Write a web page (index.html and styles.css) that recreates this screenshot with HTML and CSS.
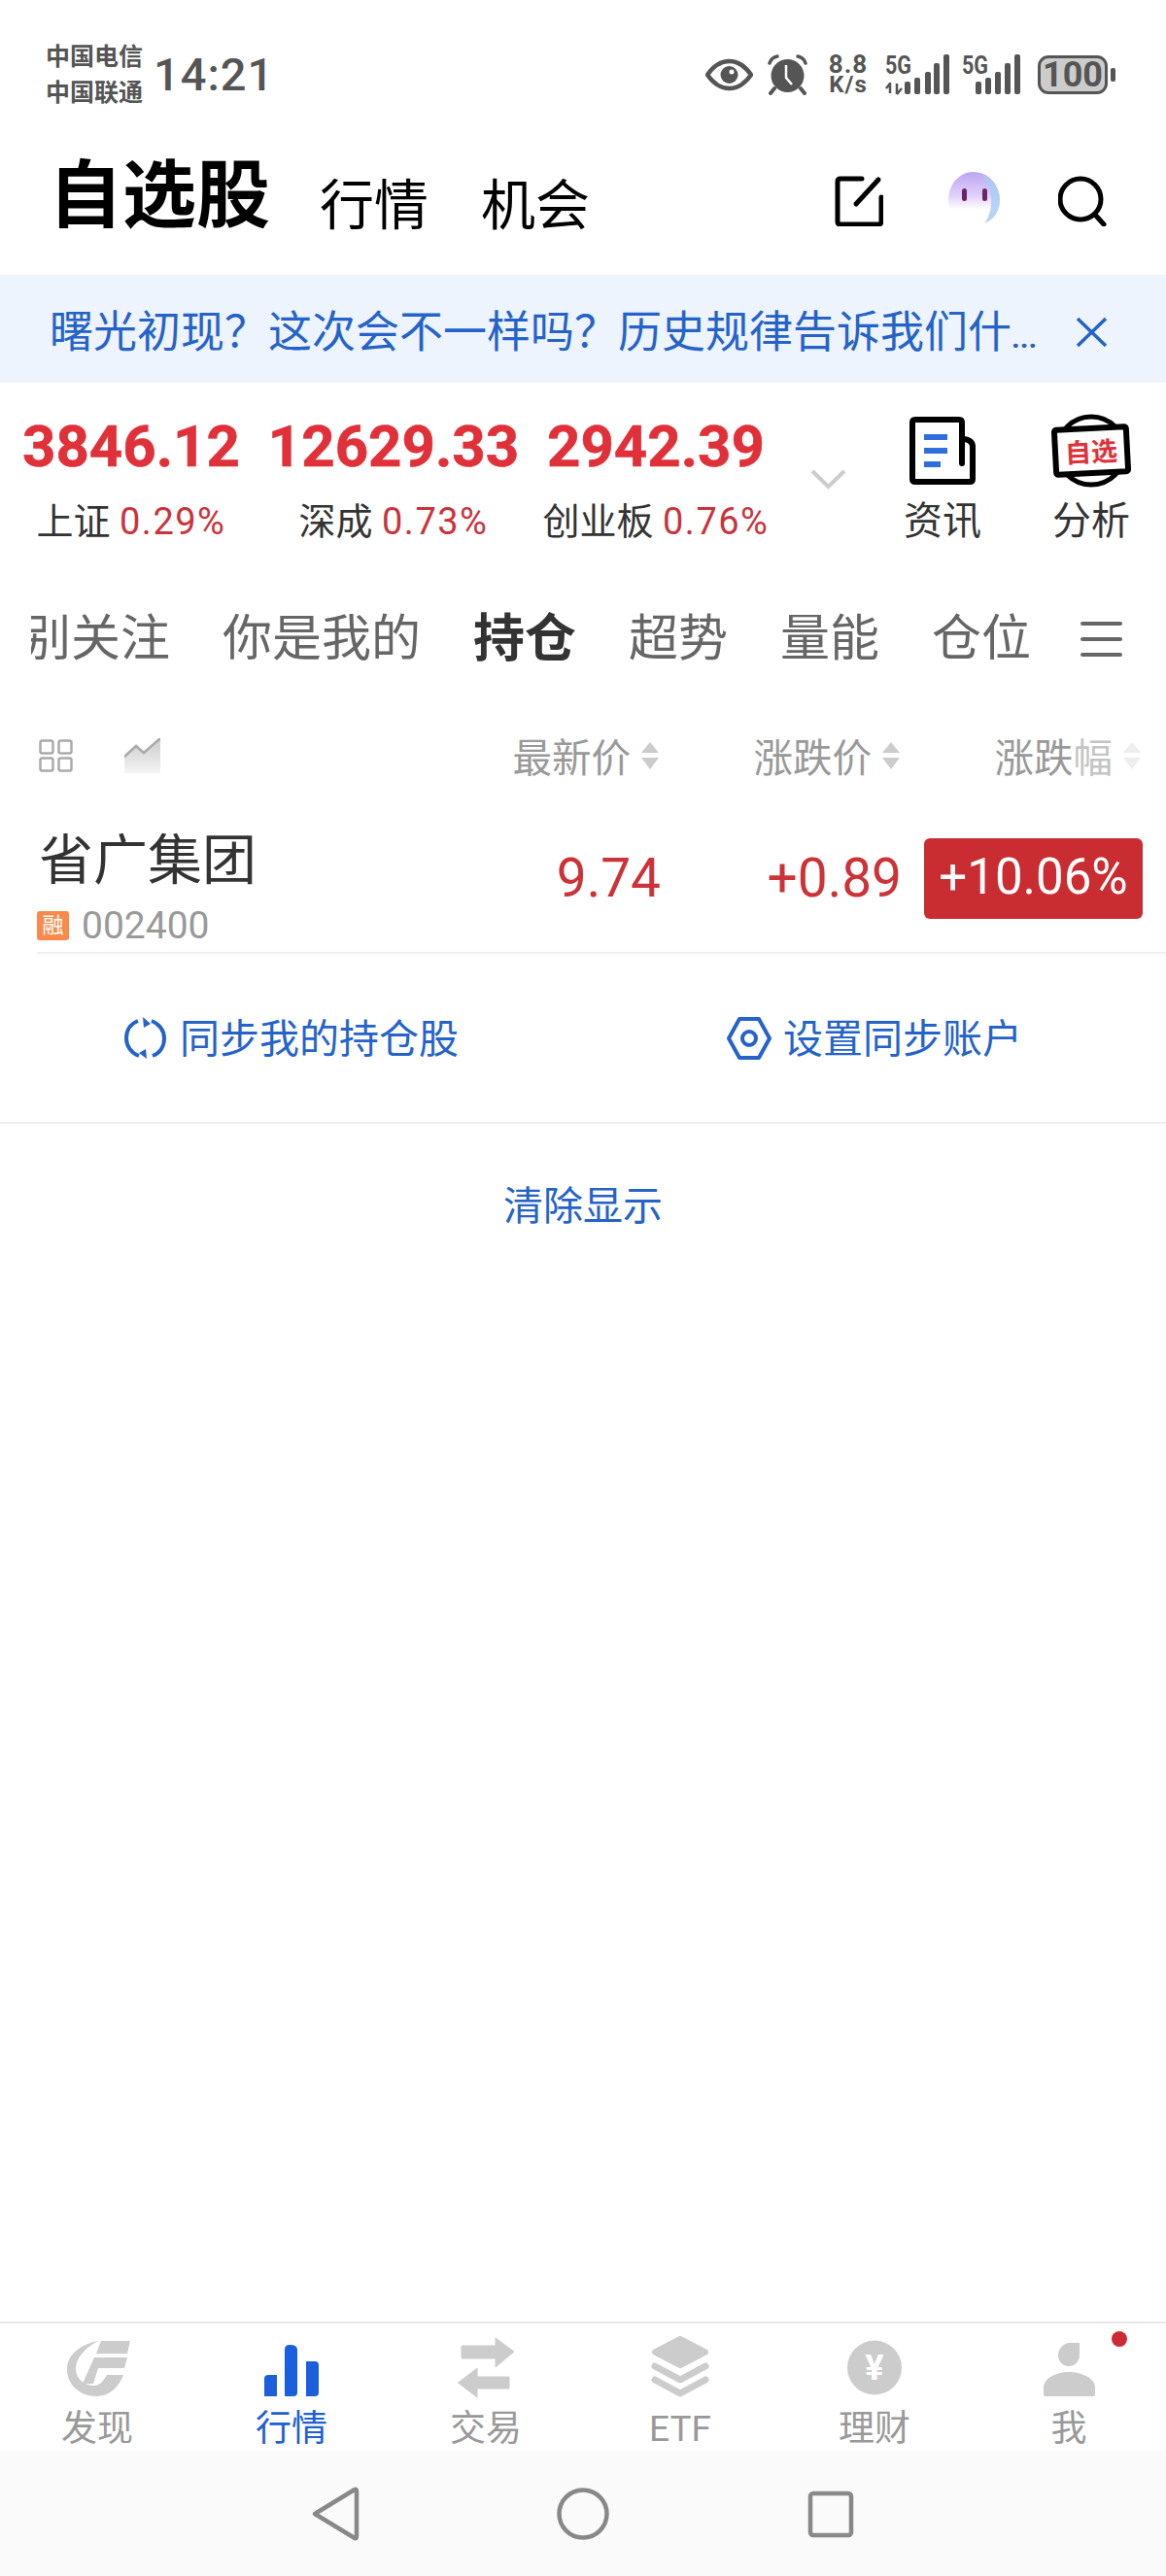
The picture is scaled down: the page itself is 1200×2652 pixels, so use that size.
FILE: index.html
```html
<!DOCTYPE html>
<html lang="zh">
<head>
    <meta charset="utf-8">
    <title>自选股</title>
    <link rel="stylesheet" href="styles.css">
</head>
<body>
    <div class="status">
        <div class="carrier">
            <div>中国电信</div>
            <div>中国联通</div>
        </div>
        <div class="time">14:21</div>
        <div class="status-icons">
            <svg class="st-eye" width="49" height="34" viewBox="0 0 49 34">
                <path d="M2 17 C9 7 16 3 24.5 3 C33 3 40 7 47 17 C40 27 33 31 24.5 31 C16 31 9 27 2 17 Z" fill="none" stroke="#555" stroke-width="4.5"/>
                <circle cx="24.5" cy="17" r="9" fill="#555"/>
                <circle cx="27" cy="14" r="2.5" fill="#fff"/>
            </svg>
            <svg class="st-alarm" width="41" height="42" viewBox="0 0 41 42">
                <circle cx="20.5" cy="22" r="17" fill="#555"/>
                <path d="M2 9 Q4 3 10 2 M39 9 Q37 3 31 2" fill="none" stroke="#555" stroke-width="3.5" stroke-linecap="round"/>
                <path d="M7 35 L3 40 M34 35 L38 40" stroke="#555" stroke-width="4" stroke-linecap="round"/>
                <path d="M19 11 V24 L25 31" fill="none" stroke="#fff" stroke-width="2.5"/>
            </svg>
            <div class="st-speed">
                <div class="speed-num">8.8</div>
                <div class="speed-unit">K/s</div>
            </div>
            <svg class="st-sig1" width="66" height="54" viewBox="0 -6 66 54">
                <text class="sig-text" x="0" y="20" textLength="27" lengthAdjust="spacingAndGlyphs">5G</text>
                <path d="M5 29 V40 M1 35 L5 30 M12 30 V41 M12 41 L17 35" fill="none" stroke="#555" stroke-width="2.5"/>
                <rect x="20" y="28" width="6" height="13" rx="2" fill="#555"/>
                <rect x="30" y="24" width="6" height="17" rx="2" fill="#555"/>
                <rect x="41" y="18" width="6" height="23" rx="2" fill="#555"/>
                <rect x="50" y="9" width="6" height="32" rx="2" fill="#555"/>
                <rect x="60" y="0" width="6" height="41" rx="2" fill="#555"/>
            </svg>
            <svg class="st-sig2" width="61" height="54" viewBox="0 -6 61 54">
                <text class="sig-text" x="0" y="20" textLength="27" lengthAdjust="spacingAndGlyphs">5G</text>
                <rect x="14" y="28" width="6" height="13" rx="2" fill="#555"/>
                <rect x="24" y="24" width="6" height="17" rx="2" fill="#555"/>
                <rect x="34" y="18" width="6" height="23" rx="2" fill="#555"/>
                <rect x="44" y="9" width="6" height="32" rx="2" fill="#555"/>
                <rect x="54" y="0" width="6" height="41" rx="2" fill="#555"/>
            </svg>
            <div class="battery">100</div>
            <div class="battery-nub"></div>
        </div>
    </div>

    <div class="titlebar">
        <div class="title-main">自选股</div>
        <div class="title-sub">行情</div>
        <div class="title-sub">机会</div>
        <div class="title-icons">
            <svg width="50" height="57" viewBox="0 0 50 57">
                <path d="M28 8 H6 Q3 8 3 11 V52 Q3 55 6 55 H45 Q48 55 48 52 V27" fill="none" stroke="#000" stroke-width="5" stroke-linecap="round"/>
                <path d="M22 34 L45 9" fill="none" stroke="#000" stroke-width="5" stroke-linecap="round"/>
            </svg>
            <svg class="icon-ghost" width="54" height="57" viewBox="0 0 54 57">
                <defs>
                    <linearGradient id="ghostBody" x1="0" y1="0" x2="0" y2="1">
                        <stop offset="0" stop-color="#bba6f0"/>
                        <stop offset="0.45" stop-color="#e0d0fa"/>
                        <stop offset="0.72" stop-color="#ffffff"/>
                    </linearGradient>
                </defs>
                <path d="M27 1 C42 1 54 14 54 30 C54 44 44 55 27 55 C12 55 1 44 1 30 C1 14 12 1 27 1 Z" fill="url(#ghostBody)"/>
                <path d="M36 4 C47 9 54 19 54 30 C54 42 47 51 38 54 C46 44 50 24 36 4 Z" fill="#a9cdf6" opacity="0.85"/>
                <rect x="15" y="18" width="5" height="13" rx="2.5" fill="#6a2467"/>
                <rect x="36" y="18" width="5" height="13" rx="2.5" fill="#6a2467"/>
            </svg>
            <svg class="icon-search" width="50" height="57" viewBox="0 0 50 57">
                <circle cx="23" cy="29" r="21" fill="none" stroke="#000" stroke-width="5"/>
                <path d="M38 45 L47 55" stroke="#000" stroke-width="5" stroke-linecap="round"/>
            </svg>
        </div>
    </div>

    <div class="banner">
        <div class="banner-text">曙光初现？这次会不一样吗？历史规律告诉我们什<span class="dots">...</span></div>
        <svg class="banner-close" width="33" height="32" viewBox="0 0 33 32">
            <path d="M2 2 L31 30 M31 2 L2 30" stroke="#2563c9" stroke-width="3.5"/>
        </svg>
    </div>

    <div class="indexes">
        <div class="index">
            <div class="index-val">3846.12</div>
            <div class="index-sub">上证 <span class="pct">0.29%</span></div>
        </div>
        <div class="index">
            <div class="index-val">12629.33</div>
            <div class="index-sub">深成 <span class="pct">0.73%</span></div>
        </div>
        <div class="index">
            <div class="index-val">2942.39</div>
            <div class="index-sub">创业板 <span class="pct">0.76%</span></div>
        </div>
        <svg class="chevron" width="37" height="21" viewBox="0 0 37 21">
            <path d="M2 2 L18.5 18 L35 2" fill="none" stroke="#ccc" stroke-width="4"/>
        </svg>
        <div class="tool">
            <svg width="68" height="80" viewBox="0 0 68 80">
                <rect x="15" y="23" width="24" height="6" fill="#2f6fdc"/>
                <rect x="15" y="37" width="24" height="6" fill="#2f6fdc"/>
                <rect x="15" y="51" width="17" height="6" fill="#2f6fdc"/>
                <path d="M54 53 V11 Q54 8 51 8 H6 Q3 8 3 11 V69 Q3 72 6 72 H62 Q65 72 65 69 V36 Q65 29 56 28" fill="none" stroke="#000" stroke-width="6" stroke-linecap="round"/>
            </svg>
            <div class="tool-label">资讯</div>
        </div>
        <div class="tool">
            <svg width="84" height="80" viewBox="0 0 84 80">
                <circle cx="42" cy="40" r="35" fill="none" stroke="#000" stroke-width="5"/>
                <g transform="rotate(-3 42 40)">
                    <rect x="5" y="17" width="74" height="46" rx="2" fill="#fff" stroke="#000" stroke-width="6"/>
                    <text class="tool-brand" x="42" y="51" text-anchor="middle">自选</text>
                </g>
            </svg>
            <div class="tool-label">分析</div>
        </div>
    </div>

    <div class="tabs">
        <div class="tabs-scroll">
            <div class="tab first">别关注</div>
            <div class="tab">你是我的</div>
            <div class="tab active">持仓</div>
            <div class="tab">超势</div>
            <div class="tab">量能</div>
            <div class="tab">仓位</div>
        </div>
        <div class="tabs-menu">
            <span></span>
            <span></span>
            <span></span>
        </div>
    </div>

    <div class="table-row table-head">
        <div class="head-icons">
            <svg width="35" height="34" viewBox="0 0 35 34">
                <rect x="1.5" y="1.5" width="13" height="13" rx="2" fill="none" stroke="#aaa" stroke-width="2.5"/>
                <rect x="20.5" y="1.5" width="13" height="13" rx="2" fill="none" stroke="#aaa" stroke-width="2.5"/>
                <rect x="1.5" y="19.5" width="13" height="13" rx="2" fill="none" stroke="#aaa" stroke-width="2.5"/>
                <rect x="20.5" y="19.5" width="13" height="13" rx="2" fill="none" stroke="#aaa" stroke-width="2.5"/>
            </svg>
            <svg width="37" height="36" viewBox="0 0 37 36">
                <defs>
                    <linearGradient id="chartFill" x1="0" y1="0" x2="0" y2="1">
                        <stop offset="0" stop-color="#ccc"/>
                        <stop offset="1" stop-color="#f4f4f4"/>
                    </linearGradient>
                </defs>
                <path d="M0 19 L12 8 L20 15 L37 0 V36 H0 Z" fill="url(#chartFill)"/>
                <path d="M0 19 L12 8 L20 15 L37 0" fill="none" stroke="#aaa" stroke-width="2.5"/>
            </svg>
        </div>
        <div class="head-cell">最新价
            <svg class="sort" width="18" height="28" viewBox="0 0 18 28"><path d="M9 0 L18 11 H0 Z M0 16 H18 L9 28 Z" fill="#ccc"/></svg>
        </div>
        <div class="head-cell">涨跌价
            <svg class="sort" width="18" height="28" viewBox="0 0 18 28"><path d="M9 0 L18 11 H0 Z M0 16 H18 L9 28 Z" fill="#ccc"/></svg>
        </div>
        <div class="head-cell">涨跌<span class="fade">幅</span>
            <svg class="sort" width="18" height="28" viewBox="0 0 18 28"><path d="M9 0 L18 11 H0 Z M0 16 H18 L9 28 Z" fill="#eee"/></svg>
        </div>
    </div>

    <div class="table-row stock">
        <div class="stock-info">
            <div class="stock-name">省广集团</div>
            <div class="stock-code"><span class="tag">融</span>002400</div>
        </div>
        <div class="stock-num">9.74</div>
        <div class="stock-num">+0.89</div>
        <div class="stock-pct">+10.06%</div>
    </div>
    <div class="stock-line"></div>

    <div class="actions">
        <div class="action">
            <svg width="43" height="44" viewBox="0 0 43 44">
                <path d="M14 4 C6 7 2 14 2 22 C2 30 7 37 15 40 M29 40 C37 37 41 30 41 22 C41 14 36 7 28 4" fill="none" stroke="#2563c9" stroke-width="4"/>
                <path d="M19 0 L27 7 L20 11 Z M23 43 L15 37 L22 33 Z" fill="#2563c9"/>
            </svg>
            <span class="action-text">同步我的持仓股</span>
        </div>
        <div class="action wide">
            <svg width="46" height="44" viewBox="0 0 46 44">
                <path d="M13 2 H33 L44 22 L33 42 H13 L2 22 Z" fill="none" stroke="#2563c9" stroke-width="4" stroke-linejoin="round"/>
                <circle cx="23" cy="22" r="7" fill="none" stroke="#2563c9" stroke-width="4"/>
            </svg>
            <span class="action-text">设置同步账户</span>
        </div>
    </div>

    <div class="clear-row">清除显示</div>

    <div class="spacer"></div>

    <div class="nav">
        <div class="nav-item">
            <svg width="80" height="66" viewBox="0 0 80 66">
                <g transform="translate(8 7)" fill="#ccc">
                    <path d="M33 0 C13 4 1 15 1 29 C1 45 14 57 31 57 C44 57 54 48 59 35 L42 35 C38 42 34 46 29 46 C18 46 10 38 10 29 C10 17 20 7 33 0 Z"/>
                    <path d="M36 0 H66 L63 13 H31 Z"/>
                    <path d="M29 17 H63 L60 28 H33 L28 44 H17 Z"/>
                </g>
            </svg>
            <div class="nav-label">发现</div>
        </div>
        <div class="nav-item active">
            <svg width="80" height="66" viewBox="0 0 80 66">
                <path d="M12 46 Q12 42 16 42 H25 V64 H12 Z" fill="#1c5fdc"/>
                <path d="M33 16 Q33 11 38 11 Q46 11 46 16 V60 Q46 64 42 64 H33 Z" fill="#1c5fdc"/>
                <path d="M55 28 H64 Q68 28 68 32 V60 Q68 64 64 64 H55 Z" fill="#1c5fdc"/>
            </svg>
            <div class="nav-label">行情</div>
        </div>
        <div class="nav-item">
            <svg width="80" height="66" viewBox="0 0 80 66">
                <path d="M15 12 H50 V4 L69 18 L50 34 V25 H15 Z" fill="#ccc" stroke="#ccc" stroke-width="1" stroke-linejoin="round"/>
                <path d="M64 44 V56 H31 V65 L11.500 50 L31 35 V44 Z" fill="#ccc" stroke="#ccc" stroke-width="1" stroke-linejoin="round"/>
            </svg>
            <div class="nav-label">交易</div>
        </div>
        <div class="nav-item">
            <svg width="80" height="66" viewBox="0 0 80 66">
                <path d="M14 18.500 L40 5 L66 18.500 L40 32 Z" fill="#ccc" stroke="#ccc" stroke-width="6" stroke-linejoin="round"/>
                <path d="M14 33 L40 47 L66 33 M14 47 L40 61 L66 47" fill="none" stroke="#ccc" stroke-width="7" stroke-linecap="round" stroke-linejoin="round"/>
            </svg>
            <div class="nav-label">ETF</div>
        </div>
        <div class="nav-item">
            <svg width="80" height="66" viewBox="0 0 80 66">
                <circle cx="40" cy="34.500" r="28" fill="#ccc"/>
                <text class="nav-yuan" x="40" y="47" text-anchor="middle">¥</text>
            </svg>
            <div class="nav-label">理财</div>
        </div>
        <div class="nav-item">
            <svg width="80" height="66" viewBox="0 0 80 66">
                <path d="M40 9 H51 V22 A11 11 0 1 1 29 22 A13 13 0 0 1 40 9 Z" fill="#ccc"/>
                <path d="M14 55 C14 45 28 39 40 39 C52 39 67 45 67 55 V62 Q67 64 65 64 H16 Q14 64 14 62 Z" fill="#ccc"/>
            </svg>
            <div class="nav-label">我</div>
            <div class="nav-dot"></div>
        </div>
    </div>

    <div class="sysnav">
        <svg width="60" height="60" viewBox="0 0 60 60">
            <path d="M9 30 L50 5 Q52 4 52 7 V53 Q52 56 50 55 Z" fill="none" stroke="#888" stroke-width="4.500" stroke-linejoin="round"/>
        </svg>
        <svg width="60" height="60" viewBox="0 0 60 60">
            <circle cx="30" cy="30" r="24.500" fill="none" stroke="#888" stroke-width="4.500"/>
        </svg>
        <svg width="60" height="60" viewBox="0 0 60 60">
            <rect x="9" y="9" width="42" height="43" rx="3" fill="none" stroke="#888" stroke-width="4.500"/>
        </svg>
    </div>
</body>
</html>
```

FILE: styles.css
```css
body {
    font-family: Roboto, "Noto Sans CJK SC", sans-serif;
    background-color: #fff;
    color: #333;
    display: flex;
    flex-direction: column;
    height: 100vh;
    margin: 0;
    overflow: hidden;
}

/* status bar */
.status {
    display: flex;
    align-items: flex-start;
    height: 130px;
    padding: 40px 52px 0 47px;
    box-sizing: border-box;
    color: #555;
}

.carrier {
    font-size: 25px;
    font-weight: 700;
    line-height: 37px;
}

.time {
    margin-left: 11px;
    font-size: 47px;
    font-weight: 500;
    line-height: 73px;
    letter-spacing: 1px;
}

.status-icons {
    display: flex;
    align-items: center;
    height: 73px;
    margin-left: auto;
}

.st-alarm { margin-left: 15px; }
.st-speed { margin-left: 21px; width: 42px; text-align: center; font-weight: 700; }
.st-sig1 { margin-left: 17px; }
.st-sig2 { margin-left: 13px; }

.speed-num {
    font-size: 26px;
    line-height: 21px;
    letter-spacing: 1px;
}

.speed-unit {
    font-size: 24px;
    line-height: 21px;
    letter-spacing: 1px;
}

.sig-text {
    font-family: Roboto, sans-serif;
    font-size: 26px;
    font-weight: 700;
    fill: #555;
}

.battery {
    margin-left: 17px;
    width: 72px;
    height: 40px;
    box-sizing: border-box;
    border: 3px solid #555;
    border-radius: 11px;
    background-color: #ccc;
    font-size: 36px;
    font-weight: 700;
    line-height: 34px;
    text-align: center;
}

.battery-nub {
    margin-left: 3px;
    width: 5px;
    height: 14px;
    border-radius: 2px;
    background-color: #555;
}

/* title */
.titlebar {
    display: flex;
    align-items: flex-end;
    height: 153px;
    padding: 0 61px 43px 50px;
    box-sizing: border-box;
    color: #000;
}

.title-main {
    margin-right: -3px;
    font-size: 76px;
    font-weight: 700;
    line-height: 76px;
}

.title-sub {
    margin-left: 54px;
    font-size: 56px;
    line-height: 56px;
}

.title-icons {
    display: flex;
    align-items: flex-end;
    margin-left: auto;
    margin-bottom: 7px;
}

.icon-ghost {
    margin-left: 66px;
}

.icon-search {
    margin-left: 60px;
}

/* banner */
.banner {
    display: flex;
    align-items: center;
    height: 111px;
    padding: 0 60px 0 51px;
    box-sizing: border-box;
    background-color: #eef4fd;
    color: #2563c9;
}

.banner-text {
    font-size: 45px;
    white-space: nowrap;
}

.dots {
    font-size: 30px;
    font-weight: 700;
}

.banner-close {
    margin-left: auto;
    margin-top: 6px;
}

/* indexes */
.indexes {
    display: flex;
    align-items: flex-start;
    height: 206px;
    padding-top: 30px;
    box-sizing: border-box;
}

.index {
    width: 270px;
    text-align: center;
}

.index-val {
    color: #e0313a;
    font-size: 60px;
    font-weight: 700;
    line-height: 72px;
    -webkit-text-stroke: 0.6px #e0313a;
}

.index-sub {
    margin-top: 14px;
    font-size: 38px;
    line-height: 54px;
    white-space: nowrap;
}

.pct {
    color: #c9343c;
    font-size: 38px;
    letter-spacing: 1.500px;
}

.chevron {
    margin-left: 24px;
    margin-top: 59px;
}

.tool {
    width: 120px;
    text-align: center;
    margin-left: 33px;
}

.chevron + .tool {
    margin-left: 39px;
}

.tool svg {
    display: block;
    margin: 0 auto;
}

.tool-label {
    margin-top: 6px;
    font-size: 40px;
    line-height: 54px;
}

.tool-brand {
    font-family: "Noto Sans CJK SC", sans-serif;
    font-size: 27px;
    font-weight: 700;
    fill: #e0313a;
}

/* tabs */
.tabs {
    display: flex;
    align-items: center;
    height: 120px;
    padding-bottom: 4px;
    padding-right: 45px;
    box-sizing: border-box;
    color: #666;
}

.tabs-scroll {
    display: flex;
    gap: 54px;
    margin-left: 32px;
    overflow: hidden;
    font-size: 51px;
    line-height: 60px;
    white-space: nowrap;
}

/* first tab is scrolled partly out of the strip */
.tab.first {
    margin-left: -10px;
}

.tab.active {
    color: #333;
    font-size: 53px;
    font-weight: 700;
}

.tabs-menu {
    display: flex;
    flex-direction: column;
    gap: 12px;
    margin-left: auto;
    width: 43px;
}

.tabs-menu span {
    height: 4px;
    border-radius: 2px;
    background-color: #666;
}

/* table */
.table-row {
    display: grid;
    grid-template-columns: 1fr 250px 248px 248px;
    padding: 0 24px 0 38px;
}

.table-head {
    align-items: center;
    height: 120px;
    padding-bottom: 5px;
    box-sizing: border-box;
    color: #999;
    font-size: 40.500px;
}

.head-icons {
    display: flex;
    align-items: center;
    gap: 53px;
    margin-left: 2px;
}

.head-cell {
    display: flex;
    align-items: center;
    justify-content: flex-end;
    white-space: nowrap;
    padding-right: 2px;
}

.fade {
    color: #c4c4c4;
}

.sort {
    margin-left: 11px;
}

.stock {
    height: 140px;
    padding-top: 16px;
    box-sizing: border-box;
}

.stock-name {
    margin-left: 2px;
    font-size: 56px;
    line-height: 60px;
}

.stock-code {
    display: flex;
    align-items: center;
    margin-top: 15px;
    color: #999;
    font-size: 39px;
    line-height: 44px;
}

.tag {
    width: 33px;
    height: 30px;
    margin-right: 13px;
    border-radius: 3px;
    background-color: #f98a4b;
    color: #fff;
    font-size: 22px;
    line-height: 30px;
    text-align: center;
}

.stock-num {
    margin-top: 7px;
    color: #cc3338;
    font-size: 55px;
    line-height: 83px;
    text-align: right;
}

.stock-pct {
    margin-top: 7px;
    margin-left: 23px;
    height: 83px;
    border-radius: 6px;
    background-color: #c92d32;
    color: #fff;
    font-size: 51px;
    line-height: 80px;
    text-align: center;
}

.stock-line {
    height: 2px;
    margin-left: 38px;
    background-color: #f0f0f0;
}

/* sync links */
.actions {
    display: flex;
    height: 175px;
    border-bottom: 2px solid #f0f0f0;
    box-sizing: border-box;
    color: #2563c9;
    font-size: 41px;
}

.action {
    display: flex;
    align-items: center;
    justify-content: center;
    gap: 14px;
    width: 600px;
}

.action.wide {
    gap: 12px;
}

.action-text {
    padding-bottom: 6px;
}

.clear-row {
    height: 168px;
    color: #2563c9;
    font-size: 41px;
    line-height: 171px;
    text-align: center;
}

.spacer {
    flex: 1;
}

/* bottom nav */
.nav {
    display: flex;
    height: 133px;
    border-top: 2px solid #e8e8e8;
    box-sizing: border-box;
}

.nav-item {
    position: relative;
    flex: 1;
    padding-top: 11px;
    text-align: center;
    color: #999;
}

.nav-item svg {
    display: block;
    margin: 0 auto;
}

.nav-item.active {
    color: #2060d0;
}

.nav-label {
    margin-top: 12px;
    font-size: 37px;
    line-height: 40px;
}

.nav-yuan {
    font-family: Roboto, sans-serif;
    font-size: 36px;
    font-weight: 700;
    fill: #fff;
}

.nav-dot {
    position: absolute;
    left: 144px;
    top: 8px;
    width: 16px;
    height: 16px;
    border-radius: 50%;
    background-color: #cc2b33;
}

.sysnav {
    display: flex;
    align-items: center;
    justify-content: center;
    gap: 195px;
    height: 129px;
    background-color: #fafafa;
}
```
